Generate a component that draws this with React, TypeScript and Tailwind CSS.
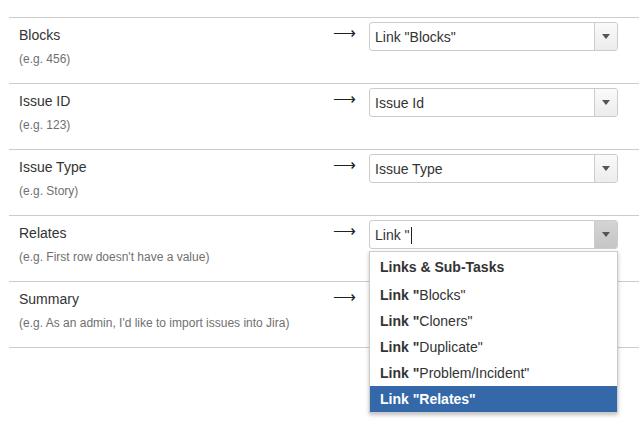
import React from "react";

type Row = { label: string; hint: string; value: string; open?: boolean };

const rows: Row[] = [
  { label: "Blocks", hint: "(e.g. 456)", value: 'Link "Blocks"' },
  { label: "Issue ID", hint: "(e.g. 123)", value: "Issue Id" },
  { label: "Issue Type", hint: "(e.g. Story)", value: "Issue Type" },
  { label: "Relates", hint: "(e.g. First row doesn't have a value)", value: 'Link "', open: true },
  { label: "Summary", hint: "(e.g. As an admin, I'd like to import issues into Jira)", value: "" },
];

const options = ['"Blocks"', '"Cloners"', '"Duplicate"', '"Problem/Incident"', '"Relates"'];

function Caret() {
  return (
    <svg width="8" height="5" viewBox="0 0 8 5">
      <path d="M0 0h8L4 5z" fill="#555" />
    </svg>
  );
}

function Select({ value, open }: { value: string; open?: boolean }) {
  return (
    <div className="relative w-[249px] h-[29px]">
      <div className="flex h-full border border-[#cccccc] rounded-[3px] bg-white overflow-hidden">
        <div className="flex-1 flex items-center pl-[5px] pt-[1px] text-[14px] text-[#333]">
          {value}
          {open && <span className="ml-[1px] inline-block w-px h-[17px] bg-[#222]" />}
        </div>
        <div
          className={
            "w-[23px] flex items-center justify-center border-l border-[#cccccc] " +
            (open ? "bg-gradient-to-b from-[#d4d4d4] to-[#c6c6c6]" : "bg-gradient-to-b from-[#fafafa] to-[#ececec]")
          }
        >
          <Caret />
        </div>
      </div>
      {open && (
        <div className="absolute left-0 top-[31px] w-[249px] bg-white border border-[#cccccc] shadow-[0_2px_4px_rgba(0,0,0,0.25)] z-10 text-[14px] text-[#333]">
          <div className="h-[30px] flex items-center pl-[10px] font-bold">Links &amp; Sub-Tasks</div>
          {options.map((o, i) => {
            const active = i === options.length - 1;
            return (
              <div
                key={o}
                className={
                  "h-[26px] flex items-center pl-[10px] " + (active ? "bg-[#3468a9] text-white font-bold" : "")
                }
              >
                <span className="font-bold">Link</span>
                <span>&nbsp;</span>
                <span className={active ? "font-bold" : ""}>
                  <b>"</b>
                  {o.slice(1)}
                </span>
              </div>
            );
          })}
        </div>
      )}
    </div>
  );
}

export default function App() {
  return (
    <div className="w-[639px] h-[422px] bg-white overflow-hidden pt-[17px] font-['Liberation_Sans',Arial,sans-serif]">
      <div className="ml-[9px] w-[630px] border-b border-[#cccccc]">
        {rows.map((r) => (
          <div key={r.label} className="flex h-[66px] border-t border-[#cccccc]">
            <div className="w-[324px] pl-[10px] pt-[7px]">
              <div className="text-[14px] leading-[20px] text-[#333]">{r.label}</div>
              <div className="mt-[6px] text-[12px] leading-[16px] text-[#707070]">{r.hint}</div>
            </div>
            <div className="w-[36px] pt-[5px] text-[16px] leading-[20px] text-[#222]">⟶</div>
            <div className="pt-[4px]">{r.value && <Select value={r.value} open={r.open} />}</div>
          </div>
        ))}
      </div>
    </div>
  );
}
